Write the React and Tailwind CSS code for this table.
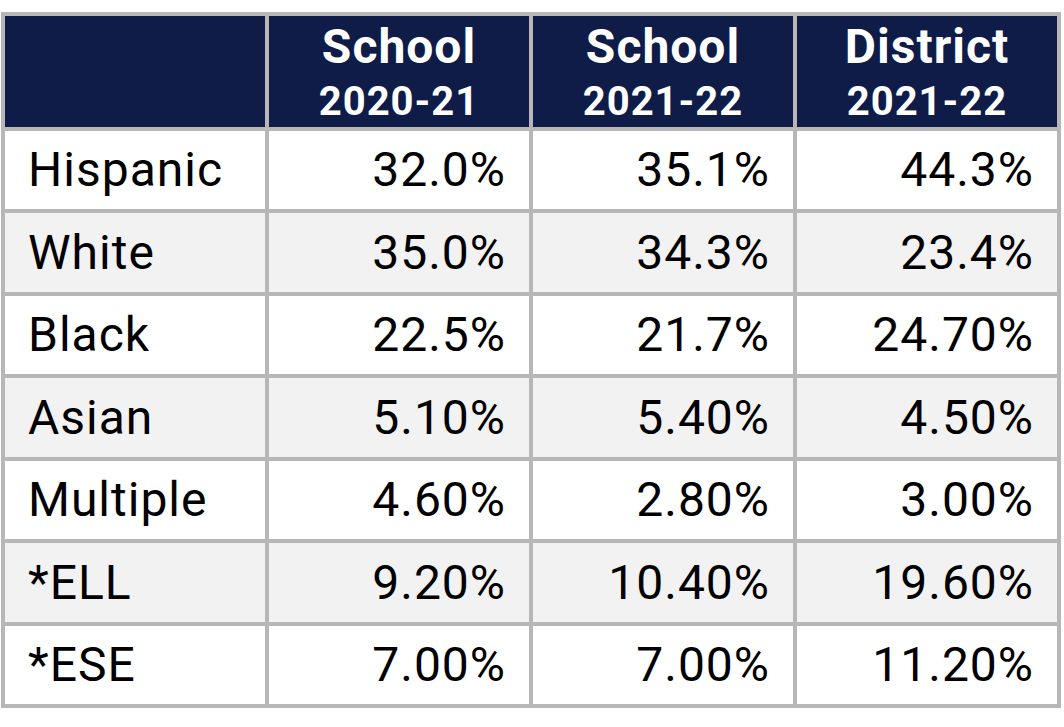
const headers = [
  { top: 'School', year: '2020-21' },
  { top: 'School', year: '2021-22' },
  { top: 'District', year: '2021-22' },
];

const rows = [
  ['Hispanic', '32.0%', '35.1%', '44.3%'],
  ['White', '35.0%', '34.3%', '23.4%'],
  ['Black', '22.5%', '21.7%', '24.70%'],
  ['Asian', '5.10%', '5.40%', '4.50%'],
  ['Multiple', '4.60%', '2.80%', '3.00%'],
  ['*ELL', '9.20%', '10.40%', '19.60%'],
  ['*ESE', '7.00%', '7.00%', '11.20%'],
];

export default function App() {
  return (
    <div className="w-[1064px] h-[727px] bg-white pt-[12px] pl-[1px] font-['Roboto',sans-serif] tracking-[1px]">
      <div className="w-[1060px] bg-[#b7b7b7] p-[4px] grid grid-cols-4 gap-[4px]">
        <div className="h-[111px] bg-[#0e1c47]" />
        {headers.map((h, i) => (
          <div key={i} className="h-[111px] bg-[#0e1c47] text-white font-bold flex flex-col items-center pt-[7px]">
            <span className="text-[48px] leading-[48px]">{h.top}</span>
            <span className="text-[40px] leading-[40px] mt-[11px]">{h.year}</span>
          </div>
        ))}
        {rows.map((r, ri) => {
          const bg = ri % 2 === 1 ? 'bg-[#f2f2f2]' : 'bg-white';
          const h = ri % 2 === 1 ? 'h-[79px]' : 'h-[78px]';
          return r.map((cell, ci) => (
            <div
              key={ri + '-' + ci}
              className={`${h} ${bg} flex items-center text-[48px] text-black ${ci === 0 ? 'justify-start pl-[23px]' : 'justify-end pr-[23px]'}`}
            >
              {cell}
            </div>
          ));
        })}
      </div>
    </div>
  );
}
